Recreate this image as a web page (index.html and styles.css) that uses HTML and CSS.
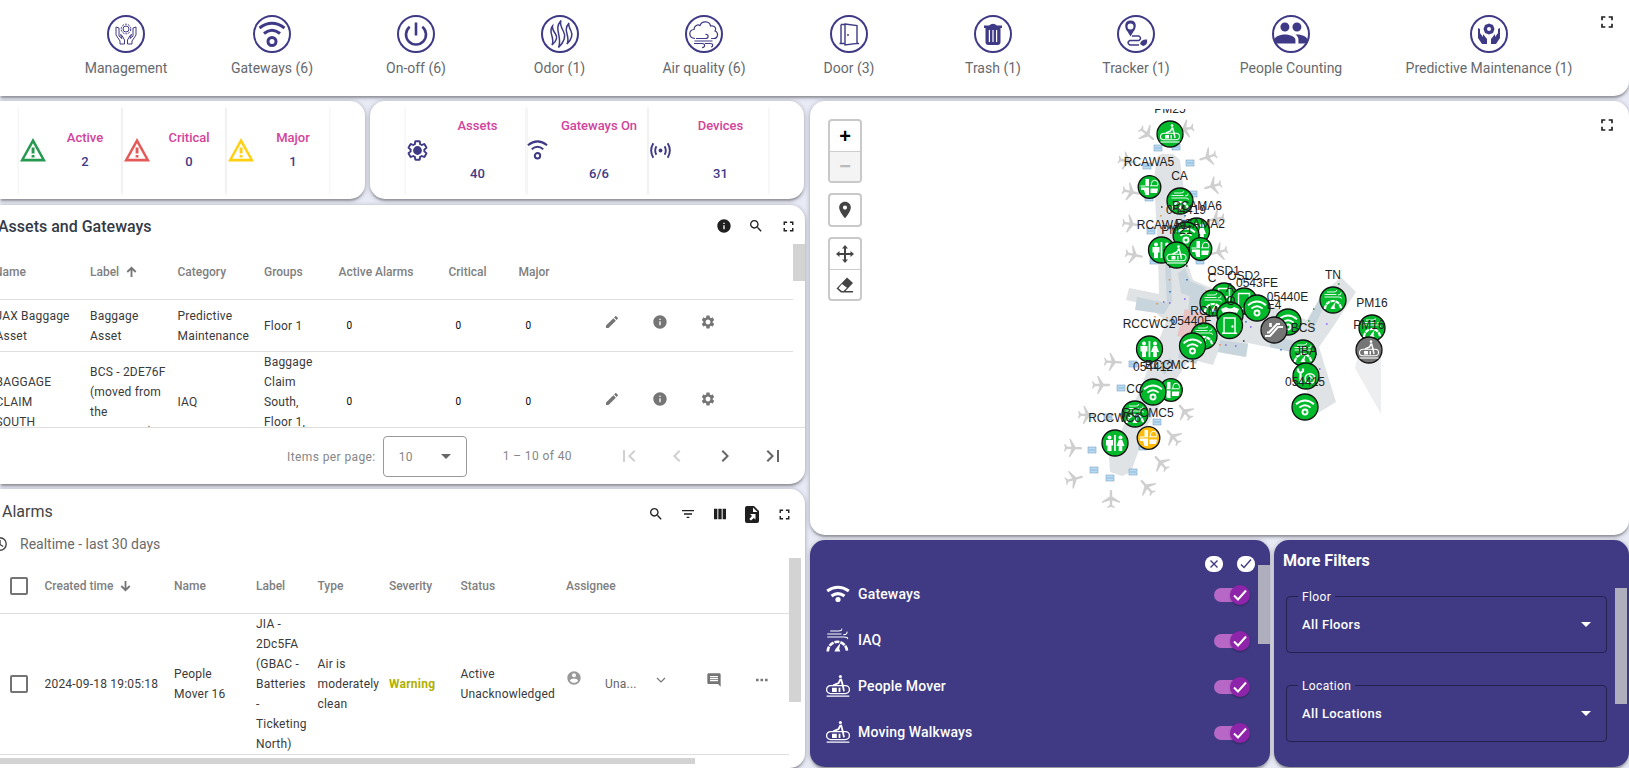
FILE: index.html
```html
<!DOCTYPE html>
<html lang="en">
<head>
<meta charset="utf-8">
<title>Airport Facilities Dashboard</title>
<link rel="stylesheet" href="styles.css">
</head>
<body>
<svg class="defs" width="0" height="0">
  <defs>
    <symbol id="fullscreen" viewBox="0 0 24 24"><path d="M7 14H5v5h5v-2H7v-3zm-2-4h2V7h3V5H5v5zm12 7h-3v2h5v-5h-2v3zM14 5v2h3v3h2V5h-5z"/></symbol>
    <symbol id="info" viewBox="0 0 24 24"><path d="M12 2C6.48 2 2 6.48 2 12s4.48 10 10 10 10-4.48 10-10S17.52 2 12 2zm1 15h-2v-6h2v6zm0-8h-2V7h2v2z"/></symbol>
    <symbol id="search" viewBox="0 0 24 24"><path d="M15.5 14h-.79l-.28-.27C15.41 12.59 16 11.11 16 9.5 16 5.91 13.09 3 9.5 3S3 5.91 3 9.5 5.91 16 9.5 16c1.61 0 3.09-.59 4.23-1.57l.27.28v.79l5 4.99L20.49 19l-4.99-5zm-6 0C7.01 14 5 11.99 5 9.5S7.01 5 9.5 5 14 7.01 14 9.5 11.99 14 9.5 14z"/></symbol>
    <symbol id="edit" viewBox="0 0 24 24"><path d="M3 17.25V21h3.75L17.81 9.94l-3.75-3.75L3 17.25zM20.71 7.04c.39-.39.39-1.02 0-1.41l-2.34-2.34c-.39-.39-1.02-.39-1.41 0l-1.83 1.83 3.75 3.75 1.83-1.83z"/></symbol>
    <symbol id="gear" viewBox="0 0 24 24"><path d="M19.14 12.94c.04-.3.06-.61.06-.94 0-.32-.02-.64-.07-.94l2.03-1.58c.18-.14.23-.41.12-.61l-1.92-3.32c-.12-.22-.37-.29-.59-.22l-2.39.96c-.5-.38-1.03-.7-1.62-.94l-.36-2.54c-.04-.24-.24-.41-.48-.41h-3.84c-.24 0-.43.17-.47.41l-.36 2.54c-.59.24-1.13.57-1.62.94l-2.39-.96c-.22-.08-.47 0-.59.22L2.74 8.87c-.12.21-.08.47.12.61l2.03 1.58c-.05.3-.09.63-.09.94s.02.64.07.94l-2.03 1.58c-.18.14-.23.41-.12.61l1.92 3.32c.12.22.37.29.59.22l2.39-.96c.5.38 1.03.7 1.62.94l.36 2.54c.05.24.24.41.48.41h3.84c.24 0 .44-.17.47-.41l.36-2.54c.59-.24 1.13-.56 1.62-.94l2.39.96c.22.08.47 0 .59-.22l1.92-3.32c.12-.22.07-.47-.12-.61l-2.01-1.58zM12 15.6c-1.98 0-3.6-1.62-3.6-3.6s1.62-3.6 3.6-3.6 3.6 1.62 3.6 3.6-1.62 3.6-3.6 3.6z"/></symbol>
    <symbol id="warn" viewBox="0 0 26 24"><path fill-rule="evenodd" d="M13 0L26 23.5H0zM13 5.3L4.3 20.7h17.4zM11.6 9.500h2.900v6h-2.900zM11.600 17h2.900v2.500h-2.900z"/></symbol>
    <symbol id="place" viewBox="0 0 24 24"><path d="M12 2C8.13 2 5 5.13 5 9c0 5.25 7 13 7 13s7-7.75 7-13c0-3.870-3.130-7-7-7zm0 9.500c-1.380 0-2.500-1.120-2.500-2.500s1.120-2.500 2.500-2.500 2.500 1.120 2.500 2.500-1.120 2.500-2.500 2.500z"/></symbol>
    <symbol id="up" viewBox="0 0 12 12"><path d="M6 11.500V1.500M1.400 6L6 1.400 10.600 6" fill="none" stroke="currentColor" stroke-width="2"/></symbol>

    <g id="g-wifi" fill="none" stroke="#fff" stroke-width="1.900">
      <path d="M-9-2.800Q0-10.200 9-2.800M-5.600.6Q0-4.200 5.600.6"/><circle cy="5" r="2.500"/>
    </g>
    <g id="g-iaq" fill="none" stroke="#fff" stroke-width=".9">
      <path d="M-8.500-5.500h12M-8.500-3h14M-6-8h7M1-8q3 0 2.600-2M5-5q3.500 0 3-2.500M5.500-3q3.500 0 3 1.800"/>
      <path d="M-8 9a8 8 0 0 1 16 0" stroke-width="2.200" stroke-dasharray="4.200 .8"/>
      <path d="M-2.500 9h5L1.500 7 2.500 2-1.500 7z" fill="#fff" stroke="none"/>
    </g>
    <g id="g-mover" fill="none" stroke="#fff" stroke-width="1.100">
      <rect x="-9.500" y="-.8" width="19" height="6.600" rx="3.300"/><path d="M-9.500 8h19"/>
      <circle cx="2" cy="-8.400" r="1.300" fill="#fff" stroke="none"/>
      <path d="M2.200-6.500L.5-3-4-1M2.500-6.500L4-1 5 4" stroke-width="1.500"/>
      <path d="M-5 1h4v3.500h-4zM.5 1h1.500v3.500H.5z" fill="#fff" stroke="none"/>
    </g>
    <g id="g-rest" fill="#fff">
      <circle cx="-5.500" cy="-5.500" r="2"/><path d="M-9-3h7v5.500h-1.500V8h-4V2.500H-9z"/><path d="M-.9-8H.8V8H-.9z"/>
      <circle cx="5.500" cy="-5.500" r="2"/><path d="M3.800-3h3.400L9.500 3H7.300V8H3.700V3H1.500z"/>
    </g>
    <g id="g-sink" fill="#fff">
      <path d="M-4-8h3.500v7.200H-4zM-8.500.6h8V3h-8zM-5.500 3h5v5h-3.500zM1 1.500h7.500L7.500 6H1z"/>
      <path d="M2-1.500V-3.500a3.200 3.200 0 0 1 6.400 0v1.500M.5-1.200h8M-9-1h5" fill="none" stroke="#fff" stroke-width="1"/>
    </g>
    <g id="g-door" fill="none" stroke="#fff" stroke-width="1.400"><path d="M-7.500 7.800h15M-5.500 7.500v-15h11v15"/><circle cx="3" cy="1" r=".5"/></g>
    <g id="g-esc" fill="none" stroke="#fff" stroke-width="2"><path d="M-9 6h5L4-3h5M-7 2.500h2L3-6h3"/><path d="M-3.500-7v4" stroke-width="2.600"/></g>
    <g id="g-tool" fill="none" stroke="#fff"><path d="M-5.500 8V-2M-8-7.500v2.500l2.500 2L-3-5v-2.500" stroke-width="2.200"/><circle cx="4" cy="2.500" r="4.800" stroke-width="1.600"/><path d="M4 5V0L6.500 2.500" stroke-width="1.300"/></g>
    <g id="g-shirt" fill="#fff"><path d="M-9-6l5-2q4 3 8 0l5 2-2 4-2.500-1V7h-9V-3L-7-2z"/></g>

    <g id="m-wifi" class="pin"><circle r="13"/><use href="#g-wifi"/></g>
    <g id="m-iaq" class="pin"><circle r="13"/><use href="#g-iaq"/></g>
    <g id="m-mover" class="pin"><circle r="13"/><use href="#g-mover"/></g>
    <g id="m-rest" class="pin"><circle r="13"/><use href="#g-rest"/></g>
    <g id="m-sink" class="pin"><circle r="11.300"/><use href="#g-sink"/></g>
    <g id="m-door" class="pin"><circle r="13"/><use href="#g-door"/></g>
    <g id="m-esc" class="pin grey"><circle r="13"/><use href="#g-esc"/></g>
    <g id="m-tool" class="pin"><circle r="13"/><use href="#g-tool"/></g>
    <g id="m-shirt" class="pin"><circle r="13"/><use href="#g-shirt"/></g>
    <path id="plane" d="M9 4V2.600L1.200-2.500V-8Q0-10.500-1.200-8V-2.500L-9 2.600V4L-1.200 1.500V6L-3.800 8V9L0 8 3.800 9V8L1.200 6V1.500z"/>
    <g id="gate"><rect x="-4" y="-3" width="8" height="6"/><path d="M-2-1v2M0-1v2M2-1v2"/></g>
  </defs>
</svg>

<div class="dash">
  <header class="card nav">
    <a class="nav-item"><span class="ring"><svg viewBox="-19 -19 38 38"><g class="line thin"><circle cy="-5" r="3"/><circle cy="-5" r="4.800" stroke-dasharray="2 1"/><path d="M-10-7v8l4 6v3h4.500V6L-4 1.500l-1.500-1 1.500 4-3-2.500V-6zM10-7v8l-4 6v3H1.500V6L4 1.500l1.500-1-1.500 4 3-2.500V-6z"/></g></svg></span>Management</a>
    <a class="nav-item"><span class="ring"><svg viewBox="-19 -19 38 38"><g class="line" stroke-width="3"><path d="M-12.500-6Q0-15.500 12.500-6M-8-.5Q0-7 8-.5"/><circle cy="7.500" r="4"/></g></svg></span>Gateways (6)</a>
    <a class="nav-item"><span class="ring"><svg viewBox="-19 -19 38 38"><g class="line" stroke-width="2.600"><path d="M0-11.500V1.500M-6.300-7.200a10 10 0 1 0 12.600 0"/></g></svg></span>On-off (6)</a>
    <a class="nav-item"><span class="ring"><svg viewBox="-19 -19 38 38"><g class="line" stroke-width="1.500"><path d="M-7.500-8c-5 6 3 12-.5 19q7-6 3.500-11t-3-8zM1-13.500c-8 9 2 16-2.500 27q9-9 5-16T1-13.500zM9-11c-7 8 2 13-2 21q7-7 4-13T9-11z"/></g></svg></span>Odor (1)</a>
    <a class="nav-item"><span class="ring"><svg viewBox="-19 -19 38 38"><g class="line" stroke-width="1.200"><path d="M-9 4.500c-7-.5-6.500-8.500-1-9 0-4 4-5.500 6-4 2-5.500 10-4.500 10.500.5 4-1 6.500 2.500 4.500 5 4 1.500 3 7.500-1 7.500H7M-8 4.500H1.500c4 0 3-5 0-4M-9.500 7H8.500M-10 9.500H-2c4 0 3 4.500 0 4M1 9.500H6c4 0 3 3.500 1 3.500"/></g></svg></span>Air quality (6)</a>
    <a class="nav-item"><span class="ring"><svg viewBox="-19 -19 38 38"><g class="line" stroke-width="1.400"><path d="M-9.500 9.500h5M-8-9.500v19M-8-9.500h4M-4-10L8-8.500V9.500L-4 11zM8 9.500h2M-1 0v2"/></g></svg></span>Door (3)</a>
    <a class="nav-item"><span class="ring"><svg viewBox="-19 -19 38 38"><path d="M-9-8.500h5q4-3.500 8 0h5v2.500H-9z"/><path fill-rule="evenodd" d="M-7.500-6h15V8q0 3-3 3h-9q-3 0-3-3zM-4.200-4V8h1.200V-4zm3.600 0V8H.6V-4zM3-4V8h1.200V-4z"/></svg></span>Trash (1)</a>
    <a class="nav-item"><span class="ring"><svg viewBox="-19 -19 38 38"><path fill-rule="evenodd" d="M-5.500-13.500c-7 0-6 8-3 11l3 5 3-5c3-3 4-11-3-11zm0 3a3 3 0 1 1 0 6 3 3 0 0 1 0-6z"/><g class="line" stroke-width="1.500"><path d="M-4 2H3q3 2 0 4.500H-6q-4 2 0 4.500H3"/></g><path d="M4 10q1-5 7-4.500Q12 11 7 12z"/></svg></span>Tracker (1)</a>
    <a class="nav-item"><span class="ring"><svg viewBox="-.8 -.8 25.300 25.300"><path d="M16 11c1.660 0 2.990-1.340 2.990-3S17.660 5 16 5c-1.660 0-3 1.340-3 3s1.340 3 3 3zm-8 0c1.660 0 2.990-1.340 2.990-3S9.660 5 8 5C6.340 5 5 6.340 5 8s1.340 3 3 3zm0 2c-2.330 0-7 1.170-7 3.500V19h14v-2.500c0-2.330-4.670-3.500-7-3.500zm8 0c-.29 0-.62.02-.97.05 1.160.84 1.970 1.970 1.970 3.450V19h6v-2.500c0-2.330-4.670-3.500-7-3.500z" transform="translate(-.2 -.8)"/></svg></span>People Counting</a>
    <a class="nav-item"><span class="ring"><svg viewBox="-19 -19 38 38"><path fill-rule="evenodd" d="M0-10.500l4 1.500 1.500 4L4-1 0 .5-4-1l-1.500-4L-4-9zM0-7a2 2 0 1 0 0 4 2 2 0 0 0 0-4z"/><path d="M-11-6l2 1v4l3 4v-3l4 5v5h-5l-4-6zM11-6L9-5v4L6 3V0L2 5v5h5l4-6z"/></svg></span>Predictive Maintenance (1)</a>
    <svg class="ico i18 nav-full"><use href="#fullscreen"/></svg>
  </header>

  <div class="cols">
    <div class="left">
      <div class="stats">
        <section class="card stat-card alarms-stat">
          <div class="stat"><svg class="warn green"><use href="#warn"/></svg><div class="stat-text"><b>Active</b><i>2</i></div></div>
          <div class="stat"><svg class="warn red"><use href="#warn"/></svg><div class="stat-text"><b>Critical</b><i>0</i></div></div>
          <div class="stat"><svg class="warn yellow"><use href="#warn"/></svg><div class="stat-text"><b>Major</b><i>1</i></div></div>
        </section>
        <section class="card stat-card assets-stat">
          <div class="stat"><svg class="sico" viewBox="0 0 24 24"><use href="#gear" fill="none" stroke="#3f3a85" stroke-width="2"/><circle cx="12" cy="12" r="3.600" fill="#3f3a85"/></svg><div class="stat-text"><b>Assets</b><i>40</i></div></div>
          <div class="stat"><svg class="sico wifi" viewBox="-12 -12 24 24"><g class="line" stroke-width="2.100"><path d="M-10-5.500Q0-13.500 10-5.500M-6-1.300Q0-6.500 6-1.300"/><circle cy="5.500" r="2.800"/></g></svg><div class="stat-text"><b>Gateways On</b><i>6/6</i></div></div>
          <div class="stat"><svg class="sico" viewBox="-12 -12 24 24"><g class="line" stroke-width="2"><path d="M-7.500-7.500q-4.500 7.500 0 15M7.500-7.500q4.500 7.500 0 15M-4.300-4.500q-2.500 4.500 0 9M4.300-4.500q2.500 4.500 0 9"/></g><circle r="2" fill="#3f3a85"/></svg><div class="stat-text"><b>Devices</b><i>31</i></div></div>
        </section>
      </div>

      <section class="card assets">
        <div class="bar">
          <h2>Assets and Gateways</h2>
          <div class="tools"><svg class="ico i16"><use href="#info"/></svg><svg class="ico i16"><use href="#search"/></svg><svg class="ico i17"><use href="#fullscreen"/></svg></div>
        </div>
        <div class="view">
          <div class="arow head"><span>Name</span><span>Label <svg class="sort"><use href="#up"/></svg></span><span>Category</span><span>Groups</span><span>Active Alarms</span><span>Critical</span><span>Major</span></div>
          <div class="arow r1"><span class="name">JAX Baggage<br>Asset</span><span>Baggage<br>Asset</span><span>Predictive<br>Maintenance</span><span>Floor 1</span><span class="num">0</span><span class="num">0</span><span class="num">0</span>
            <span class="acts"><svg class="ico i16"><use href="#edit"/></svg><svg class="ico i16"><use href="#info"/></svg><svg class="ico i16"><use href="#gear"/></svg></span></div>
          <div class="arow r2"><span class="name">BAGGAGE<br>CLAIM<br>SOUTH</span><span>BCS - 2DE76F<br>(moved from<br>the<br>concourse)</span><span>IAQ</span><span>Baggage<br>Claim<br>South,<br>Floor 1,<br>Level 1</span><span class="num">0</span><span class="num">0</span><span class="num">0</span>
            <span class="acts"><svg class="ico i16"><use href="#edit"/></svg><svg class="ico i16"><use href="#info"/></svg><svg class="ico i16"><use href="#gear"/></svg></span></div>
          <div class="thumb"></div>
        </div>
        <div class="pager">
          <span>Items per page:</span>
          <span class="select">10<svg width="10" height="5" viewBox="0 0 10 5"><path d="M0 0h10L5 5z"/></svg></span>
          <span class="range">1 – 10 of 40</span>
          <span class="pages">
            <svg class="off" viewBox="0 0 24 24"><path d="M18.410 16.590L13.820 12l4.590-4.590L17 6l-6 6 6 6zM6 6h2v12H6z"/></svg>
            <svg class="off" viewBox="0 0 24 24"><path d="M15.410 7.410L14 6l-6 6 6 6 1.410-1.410L10.830 12z"/></svg>
            <svg viewBox="0 0 24 24"><path d="M10 6L8.590 7.410 13.170 12l-4.580 4.590L10 18l6-6z"/></svg>
            <svg viewBox="0 0 24 24"><path d="M5.590 7.410L10.180 12l-4.590 4.590L7 18l6-6-6-6zM16 6h2v12h-2z"/></svg>
          </span>
        </div>
      </section>

      <section class="card alarms">
        <div class="bar">
          <h3>Alarms</h3>
          <div class="tools"><svg class="ico i16"><use href="#search"/></svg><svg class="ico i16" viewBox="0 0 24 24"><path d="M10 18h4v-2h-4v2zM3 6v2h18V6H3zm3 7h12v-2H6v2z"/></svg><svg class="ico i16" viewBox="0 0 24 24"><path d="M3 4h5v16H3zM9.500 4h5v16h-5zM16 4h5v16h-5z"/></svg><svg class="ico i16 tall" viewBox="0 0 14 17"><path fill-rule="evenodd" d="M2 0h7l5 5v10q0 2-2 2H2q-2 0-2-2V2Q0 0 2 0zM8 1.500V6h4.500zM5 8h5.500v5.500L8.800 12 6 14.500 4.300 13 7 10z"/></svg><svg class="ico i17"><use href="#fullscreen"/></svg></div>
        </div>
        <div class="period"><svg width="14" height="14" viewBox="0 0 14 14"><circle cx="7" cy="7" r="6.200"/><path d="M7 3v4.500l3.200 2"/></svg>Realtime - last 30 days</div>
        <div class="atable">
          <div class="lrow head"><span class="box"></span><span>Created time <svg class="sort down"><use href="#up"/></svg></span><span>Name</span><span>Label</span><span>Type</span><span>Severity</span><span>Status</span><span>Assignee</span></div>
          <div class="lrow body"><span class="box"></span><span>2024-09-18 19:05:18</span><span>People<br>Mover 16</span><span>JIA -<br>2Dc5FA<br>(GBAC -<br>Batteries<br>-<br>Ticketing<br>North)</span><span>Air is<br>moderately<br>clean</span><span class="sev">Warning</span><span>Active<br>Unacknowledged</span>
            <span class="assignee"><svg class="ico i16 soft" viewBox="0 0 24 24"><path d="M12 2C6.480 2 2 6.480 2 12s4.480 10 10 10 10-4.480 10-10S17.520 2 12 2zm0 3c1.660 0 3 1.340 3 3s-1.340 3-3 3-3-1.340-3-3 1.340-3 3-3zm0 14.200c-2.500 0-4.710-1.280-6-3.220.03-1.990 4-3.080 6-3.080 1.990 0 5.970 1.090 6 3.080-1.290 1.940-3.500 3.220-6 3.220z"/></svg><em>Una...</em><svg class="chev" viewBox="0 0 10 6"><path d="M1 1l4 4 4-4"/></svg><svg class="ico i16 grey-ico" viewBox="0 0 24 24"><path d="M21.990 4c0-1.100-.89-2-1.990-2H4c-1.100 0-2 .9-2 2v12c0 1.100.9 2 2 2h14l4 4-.01-18zM18 14H6v-2h12v2zm0-3H6V9h12v2zm0-3H6V6h12v2z"/></svg><svg class="dots" viewBox="0 0 12 4"><path d="M0 .8h2.600v2.400H0zM4.500.8h2.600v2.400H4.500zM9 .8h2.600v2.400H9z"/></svg></span></div>
        </div>
        <div class="thumb vbar"></div><div class="thumb hbar"></div>
      </section>
    </div>

    <div class="right">
      <section class="card map">
        <svg class="canvas" viewBox="810 109 819 423" width="819" height="423">
          <g fill="#dfe3e5">
            <path d="M1157 157l4-3h12l7 6 4 30 4 75 5 15 16 7 40 10 58 23 15-26 19-17 15 15-23 35-14 20 17 55-18 11-10-17-10-43-50-10-2 14-28-5-5 13-23-6-7 10-35 55-17 48-9 4-12-4-1-15 30-65 27-70-18-17-22-5 3-12 30 6-1-40-4-75z"/>
            <path d="M1358 355h23v59l-26-46z" fill="#eceeef"/>
          </g>
          <g fill="#c9d5dd">
            <path d="M1165 265h6l1 36-8 13-29-4 2-13 30 6zM1185 268l5 13 16 7-14 9-11-4-3-20zM1190 291q10-6 15-2l-3 20-14 5zM1220 340l28 4-2 13-28-5zM1180 348h14l6 8-4 8-18-6zM1158 366l12-8 6 5-12 12zM1270 336l30 6-5 11-25-6zM1308 320l12-22 6 4-14 30z"/>
          </g>
          <path d="M1185 309l26 6-7 27-27-6z" fill="#e8c4c4"/>
          <path d="M1169.500 279v1.500M1157 303v1.500M1155 316v1.500M1157 320v1.500M1167 317v1.500M1220 344v1.500M1206 290v1.500M1161 215v1.500" stroke="#e8903a" stroke-width="1.500"/>
          <path d="M1170 291v1.500M1187 279v1.500M1281 349v1.500M1246 321v1.500M1185 215v1.500" stroke="#2a78c8" stroke-width="1.600"/>
          <path d="M1163 302h1.500M1169 303h1.500M1184 299h1.500M1250 327h1.500M1235 346h1.500M1326 324h1.500M1225 345h1.500M1319 369h1.500" stroke="#8a5cf0" stroke-width="1.500"/>
          <path d="M1169 267h1.500M1186 266h1.500M1243 341h1.500M1161 207h1.500" stroke="#333" stroke-width="1.500"/>
          <path d="M1313 309h1.500M1338 284h1.500M1308 321h1.500" stroke="#2f8a3f" stroke-width="1.300"/>
          <g fill="#cfcfcf">
            <use href="#plane" transform="translate(1147 134) rotate(130)"/><use href="#plane" transform="translate(1185 129) rotate(-100)"/>
            <use href="#plane" transform="translate(1127 161) rotate(100)"/><use href="#plane" transform="translate(1131 192) rotate(102)"/>
            <use href="#plane" transform="translate(1131 224) rotate(98)"/><use href="#plane" transform="translate(1134 255) rotate(102)"/>
            <use href="#plane" transform="translate(1208 157) rotate(-108)"/><use href="#plane" transform="translate(1213 186) rotate(-105)"/>
            <use href="#plane" transform="translate(1216 219) rotate(-102)"/><use href="#plane" transform="translate(1219 252) rotate(-105)"/>
            <use href="#plane" transform="translate(1113 362) rotate(93)"/><use href="#plane" transform="translate(1101 385) rotate(90)"/>
            <use href="#plane" transform="translate(1087 415) rotate(92)"/><use href="#plane" transform="translate(1073 448) rotate(92)"/>
            <use href="#plane" transform="translate(1074 479) rotate(75)"/><use href="#plane" transform="translate(1111 499)"/>
            <use href="#plane" transform="translate(1147 487) rotate(-42)"/><use href="#plane" transform="translate(1161 463) rotate(-42)"/>
            <use href="#plane" transform="translate(1173 437) rotate(-42)"/><use href="#plane" transform="translate(1185 412) rotate(-40)"/>
          </g>
          <g class="gates">
            <use href="#gate" x="1158" y="148"/><use href="#gate" x="1176" y="147"/><use href="#gate" x="1190" y="163"/><use href="#gate" x="1147" y="166"/><use href="#gate" x="1193" y="194"/><use href="#gate" x="1149" y="198"/><use href="#gate" x="1151" y="231"/><use href="#gate" x="1154" y="261"/><use href="#gate" x="1200" y="261"/>
            <use href="#gate" x="1133" y="364"/><use href="#gate" x="1121" y="388"/><use href="#gate" x="1108" y="417"/><use href="#gate" x="1092" y="450"/><use href="#gate" x="1094" y="470"/><use href="#gate" x="1110" y="478"/><use href="#gate" x="1133" y="472"/><use href="#gate" x="1157" y="422"/><use href="#gate" x="1143" y="447"/>
          </g>
          <use href="#m-mover" x="1170" y="134"/><use href="#m-sink" x="1149.500" y="187"/><use href="#m-iaq" x="1180" y="201"/>
          <use href="#m-rest" x="1196.500" y="231"/><use href="#m-wifi" x="1186" y="235"/><use href="#m-sink" x="1200.500" y="249"/><use href="#m-rest" x="1161.500" y="250"/><use href="#m-mover" x="1176.500" y="255"/>
          <use href="#m-door" x="1224" y="296"/><use href="#m-door" x="1244" y="301"/><use href="#m-iaq" x="1213" y="303"/><use href="#m-iaq" x="1333" y="300"/><use href="#m-wifi" x="1257" y="308"/><use href="#m-shirt" x="1230" y="315"/><use href="#m-wifi" x="1288" y="322"/><use href="#m-iaq" x="1372" y="328"/><use href="#m-esc" x="1274" y="330"/><use href="#m-iaq" x="1204" y="336"/><use href="#m-door" x="1229.500" y="325.500"/><use href="#m-wifi" x="1192.500" y="346"/>
          <use href="#m-rest" x="1149.500" y="349"/><g transform="translate(1369 350)" class="pin grey"><circle r="13"/><use href="#g-mover"/></g>
          <use href="#m-iaq" x="1303" y="353"/><use href="#m-tool" x="1306" y="376"/><use href="#m-sink" x="1171" y="390"/><use href="#m-wifi" x="1153" y="392"/><use href="#m-wifi" x="1305" y="407"/><use href="#m-iaq" x="1135" y="414"/><g transform="translate(1148.500 438)" class="pin amber"><circle r="11.300"/><use href="#g-sink"/></g><use href="#m-rest" x="1115" y="443"/>
          <g class="labels">
            <text x="1170" y="113">PM25</text><text x="1149" y="166">RCAWA5</text><text x="1179.500" y="180">CA</text><text x="1197" y="210">RCAMA6</text><text x="1186" y="214">054419</text><text x="1162" y="229">RCAWA1</text><text x="1200" y="228">RCAMA2</text><text x="1177" y="234">PM21</text>
            <text x="1223.500" y="275">OSD1</text><text x="1243.500" y="280">OSD2</text><text x="1212" y="282">C</text><text x="1257" y="287">0543FE</text><text x="1333" y="279">TN</text><text x="1230" y="292">A</text><text x="1287.500" y="301">05440E</text><text x="1274" y="309">E4</text><text x="1231" y="305">O</text><text x="1204" y="315">RCM</text><text x="1191" y="325">05440F</text><text x="1372" y="307">PM16</text><text x="1369" y="329">PM16</text><text x="1303" y="332">BCS</text><text x="1149" y="328">RCCWC2</text>
            <text x="1306" y="355">JBA</text><text x="1170.500" y="369">RCCMC1</text><text x="1153" y="371">054412</text><text x="1305" y="386">054415</text><text x="1135" y="393">CC</text><text x="1148" y="417">RCCMC5</text><text x="1114.500" y="422">RCCWC6</text>
          </g>
        </svg>
        <div class="controls">
          <div class="ctl"><span class="plus">+</span><span class="minus">−</span></div>
          <div class="ctl"><span><svg class="ico i20"><use href="#place"/></svg></span></div>
          <div class="ctl"><span><svg class="ico i20" viewBox="0 0 20 20"><path d="M10 1l3 3.500h-2V9h4.500V7l3.500 3-3.500 3v-2H11v4.500h2L10 19l-3-3.500h2V11H4.500v2L1 10l3.500-3v2H9V4.500H7z"/></svg></span><span><svg class="ico i20" viewBox="0 0 20 20"><path fill-rule="evenodd" d="M12 2.500l6 5.500-7.500 8H18v1.500H6L1.500 13.500zM7 9l-3.500 4.300L6.800 16h1.700L12 12.800z"/></svg></span></div>
        </div>
        <svg class="ico i18 map-full"><use href="#fullscreen"/></svg>
      </section>

      <div class="filters">
        <section class="card dark layers">
          <div class="layer-tools"><svg viewBox="0 0 18 16"><rect width="18" height="16" rx="7.800"/><path d="M5.500 4.500l7 7M12.500 4.500l-7 7"/></svg><svg viewBox="0 0 18 16"><rect width="18" height="16" rx="7.800"/><path d="M4 8.500l3 3 7-8"/></svg></div>
          <div class="layer"><svg viewBox="-12 -12 24 24"><g fill="none" stroke="#fff" stroke-width="3"><path d="M-10.800-3Q0-10.500 10.800-3M-6.500 2Q0-2.800 6.500 2"/></g><circle cy="5.500" r="2.600" fill="#fff"/></svg><span>Gateways</span><i class="toggle"><svg viewBox="0 0 20 20"><path d="M4 10.500l4 4 8-9"/></svg></i></div>
          <div class="layer"><svg viewBox="-9.500 -10.500 20 20"><use href="#g-iaq"/></svg><span>IAQ</span><i class="toggle"><svg viewBox="0 0 20 20"><path d="M4 10.500l4 4 8-9"/></svg></i></div>
          <div class="layer"><svg viewBox="-10 -10.500 20 20"><use href="#g-mover"/></svg><span>People Mover</span><i class="toggle"><svg viewBox="0 0 20 20"><path d="M4 10.500l4 4 8-9"/></svg></i></div>
          <div class="layer"><svg viewBox="-10 -10.500 20 20"><use href="#g-mover"/></svg><span>Moving Walkways</span><i class="toggle"><svg viewBox="0 0 20 20"><path d="M4 10.500l4 4 8-9"/></svg></i></div>
          <div class="thumb pale"></div>
        </section>
        <section class="card dark more">
          <h4>More Filters</h4>
          <div class="field"><label>Floor</label><span>All Floors</span><svg width="10" height="5" viewBox="0 0 10 5"><path d="M0 0h10L5 5z"/></svg></div>
          <div class="field"><label>Location</label><span>All Locations</span><svg width="10" height="5" viewBox="0 0 10 5"><path d="M0 0h10L5 5z"/></svg></div>
          <div class="thumb pale"></div>
        </section>
      </div>
    </div>
  </div>
</div>
</body>
</html>
```
FILE: styles.css
```css
* { box-sizing: border-box; }
body { margin: 0; background: #e8eaf6; font-family: Roboto, sans-serif; font-size: 12px; color: #3a3a3a; overflow: hidden; }
.defs { display: block; height: 0; }
svg { display: block; flex: none; }
h2, h3, h4 { margin: 0; font-weight: 400; }
i, em { font-style: normal; }

.dash { width: 1629px; height: 768px; overflow: hidden; display: flex; flex-direction: column; gap: 5px; }
.card { position: relative; background: #fff; box-shadow: 0 3px 2px -1px rgba(0,0,0,.22), 0 1px 5px rgba(0,0,0,.3); }
.ico { fill: #1f1f1f; }
.i16 { width: 16px; height: 16px; }
.i17 { width: 17px; height: 17px; }
.i18 { width: 20px; height: 20px; }
.i20 { width: 20px; height: 20px; }
.thumb { position: absolute; background: #d3d3d3; }

/* category navigation */
.nav { height: 96px; flex: none; border-radius: 0 0 15px 0; padding: 15px 0 0 54px; display: grid; grid-template-columns: 144px 148px 140px 147px 142px 148px 140px 146px 164px 232px; }
.nav-item { display: flex; flex-direction: column; align-items: center; gap: 7px; font-size: 14px; line-height: 16px; color: #66696d; white-space: nowrap; }
.ring { width: 38px; height: 38px; border: 2px solid #3f3a85; border-radius: 50%; }
.ring svg { width: 38px; height: 38px; margin: -2px; fill: #3f3a85; }
.ring .line { fill: none; }
.line { fill: none; stroke: #3f3a85; }
.thin { stroke-width: 1; }
.nav-full { position: absolute; left: 1597px; top: 12px; }

.cols { flex: 1; display: flex; gap: 5px; min-height: 0; }
.left { width: 805px; flex: none; display: flex; flex-direction: column; }
.right { width: 819px; display: flex; flex-direction: column; gap: 5px; }

/* counters */
.stats { display: flex; gap: 5px; margin-bottom: 6px; }
.stat-card { height: 98px; display: flex; padding: 6px 0 4px; }
.alarms-stat { width: 365px; border-radius: 0 15px 15px 0; padding-left: 19px; }
.assets-stat { width: 434px; border-radius: 15px; padding-left: 36px; }
.stat { display: flex; align-items: center; box-shadow: 0 0 3px rgba(0,0,0,.1); clip-path: inset(0 -4px 0 -4px); }
.alarms-stat .stat { width: 102px; margin-right: 2px; padding-left: 1px; }
.assets-stat .stat { width: 119px; margin-right: 2.500px; }
.stat-text { flex: 1; display: flex; flex-direction: column; align-items: center; gap: 9px; line-height: 15px; font-size: 13px; }
.alarms-stat .stat-text { padding-left: 3px; margin-top: -3px; }
.assets-stat .stat-text { gap: 33px; margin-top: -4px; padding-left: 1px; }
.stat-text b { font-weight: 500; color: #d2439b; white-space: nowrap; }
.stat-text i { font-weight: 500; color: #3f3a85; }
.warn { width: 26px; height: 24px; margin-top: -3px; }
.green { fill: #24994f; } .red { fill: #e35b58; } .yellow { fill: #ffd012; }
.sico { width: 23px; height: 23px; margin-top: -2px; }
.wifi { margin-left: -2px; margin-right: 2px; }

/* assets table */
.bar { display: flex; justify-content: space-between; align-items: center; }
.tools { display: flex; align-items: center; gap: 16px; }
.assets { height: 279px; border-radius: 0 15px 15px 0; margin-bottom: 5px; display: flex; flex-direction: column; overflow: visible; }
.assets .bar { height: 39px; padding: 3px 8px 0 0; }
.assets h2 { font-size: 16px; font-weight: 500; color: #343a46; margin-left: -2px; }
.view { position: relative; height: 184px; flex: none; overflow: hidden; border-bottom: 1px solid #dedede; }
.arow { display: grid; grid-template-columns: 96px 87.500px 86.500px 74.500px 110px 70px 69px 1fr; width: 799px; margin-left: -6px; align-items: center; line-height: 20px; border-bottom: 1px solid #dedede; letter-spacing: .2px; white-space: nowrap; }
.head { font-weight: 500; color: #808080; letter-spacing: 0; }
.arow.head { height: 56px; }
.head span { display: flex; align-items: center; }
.sort { width: 11px; height: 12px; margin-left: 7px; color: #757575; }
.down { transform: rotate(180deg); }
.name { padding-left: 1.500px; }
.r1 { height: 52px; }
.r2 { height: 100px; }
.num { font-size: 10px; font-weight: 400; color: #000; padding-left: 8px; }
.num + .num { padding-left: 7px; }
.acts { display: flex; gap: 32px; padding-left: 16.500px; margin-top: -7px; }
.acts .ico, .grey-ico { fill: #757575; }
.view .thumb { right: 0; top: 0; width: 12px; height: 37px; }
.pager { flex: 1; display: flex; align-items: center; padding: 1px 0 0 287px; color: #868686; letter-spacing: .4px; white-space: nowrap; }
.select { width: 84px; height: 41px; margin-left: 7px; border: 1px solid #999; border-radius: 4px; display: flex; align-items: center; justify-content: space-between; padding: 0 15px; fill: #666; }
.range { margin: -2px 0 0 36px; width: 114px; }
.pages { display: flex; gap: 24px; fill: #666; margin-top: -2px; }
.pages svg { width: 24px; height: 24px; }
.off { opacity: .3; }

/* alarms table */
.alarms { height: 279px; border-radius: 0 15px 15px 0; }
.alarms .bar { height: 44px; padding: 6px 12px 0 2px; }
.alarms h3 { font-size: 16px; color: #444; margin-top: -5px; }
.tall { width: 14px; height: 17px; margin: 0 1px; }
.period { height: 23px; display: flex; align-items: center; gap: 13px; font-size: 14px; color: #6a6a6a; margin: -1px 0 1px -7px; }
.period svg { fill: none; stroke: #444; stroke-width: 1.400; }
.lrow { display: grid; grid-template-columns: 34.500px 129.500px 82px 61.500px 71.500px 71.500px 105.500px 1fr; width: 789px; padding-left: 10px; align-items: center; line-height: 20px; border-bottom: 1px solid #dedede; white-space: nowrap; letter-spacing: .2px; }
.lrow.head { height: 58px; letter-spacing: 0; padding-top: 2px; }
.lrow.body { height: 141px; }
.box { width: 18px; height: 18px; border: 2px solid #747474; border-radius: 2px; }
.sev { font-weight: 700; color: #b0b000; letter-spacing: .25px; }
.assignee { display: flex; align-items: center; color: #666; }
.assignee svg { margin-top: -12px; }
.soft { fill: #999; }
.assignee em { margin-left: 23px; width: 51px; }
.chev { width: 10px; height: 6px; fill: none; stroke: #777; stroke-width: 1.200; }
.assignee .chev, .assignee .dots { margin-top: -8px; }
.assignee .grey-ico { margin-left: 40px; margin-top: -9px; }
.dots { width: 12px; height: 4px; margin-left: 34px; fill: #777; }
.vbar { left: 789px; top: 69px; width: 12px; height: 144px; }
.hbar { left: 0; top: 269px; width: 695px; height: 6px; }

/* map */
.map { height: 434px; border-radius: 15px; }
.canvas { position: absolute; left: 0; top: 8px; }
.pin circle { stroke: #111; stroke-width: 1; fill: #00ba2c; }
.pin > circle { stroke-width: 1.300; }
.pin use circle { fill: none; }
.grey > circle { fill: #757575; }
.amber > circle { fill: #fdbb0a; }
.labels { font: 12px "Liberation Sans", Arial, sans-serif; fill: #222; text-anchor: middle; }
.gates { fill: #b5dbf5; stroke: #6f93b5; stroke-width: .5; }
.controls { position: absolute; left: 18px; top: 18px; display: flex; flex-direction: column; gap: 10px; }
.ctl { width: 34px; border: 2px solid #c9c9c9; border-radius: 4px; overflow: hidden; }
.ctl span { height: 30px; display: flex; align-items: center; justify-content: center; font: 700 20px "Liberation Sans", Arial, sans-serif; color: #000; }
.ctl span + span { border-top: 1px solid #ccc; height: 30px; }
.ctl .ico { fill: #444; }
.ctl .minus { background: #f4f4f4; color: #bbb; }
.map-full { position: absolute; left: 787px; top: 14px; }

/* filter panels */
.filters { display: flex; gap: 4px; }
.dark { background: #3f3a83; color: #fff; height: 227px; border-radius: 15px; }
.layers { width: 460px; padding-top: 16px; overflow: hidden; }
.layer-tools { display: flex; justify-content: flex-end; gap: 14px; padding-right: 15px; }
.layer-tools svg { width: 18px; height: 16px; fill: #fff; stroke: #3f3a83; stroke-width: 1.400; }
.layer-tools rect { stroke: none; }
.layer { height: 46px; display: flex; align-items: center; padding: 0 20px 0 16px; }
.layer:nth-child(2) { margin-top: -1px; }
.layer > svg { width: 24px; height: 24px; }
.layer span { flex: 1; margin-left: 8px; font-size: 14px; font-weight: 500; letter-spacing: .15px; }
.toggle { position: relative; width: 36px; height: 20px; margin-top: 1px; display: flex; justify-content: flex-end; }
.toggle::before { content: ""; position: absolute; left: 0; top: 3px; width: 34px; height: 14px; border-radius: 7px; background: #b768c6; }
.toggle svg { position: relative; width: 20px; height: 20px; border-radius: 50%; background: #8e24aa; fill: none; stroke: #fff; stroke-width: 2; box-shadow: 0 1px 2px rgba(0,0,0,.3); }
.layers .thumb { right: 0; top: 25px; width: 12px; height: 79px; }
.pale { background: #aeaebd; }
.more { width: 355px; padding: 11px 0 0 12px; }
.more h4 { font-size: 16px; line-height: 19px; font-weight: 700; margin-left: -3px; }
.field { position: relative; width: 321px; height: 57px; margin-top: 26px; border: 1px solid #25214f; border-radius: 4px; display: flex; align-items: center; justify-content: space-between; padding: 0 15px; font-size: 13px; font-weight: 500; letter-spacing: .35px; fill: #fff; }
.field + .field { margin-top: 32px; }
.field label { position: absolute; left: 11px; top: -7px; padding: 0 4px; background: #3f3a83; font-size: 12px; line-height: 14px; font-weight: 400; }
.more .thumb { right: 2px; top: 48px; width: 12px; height: 116px; }
```
